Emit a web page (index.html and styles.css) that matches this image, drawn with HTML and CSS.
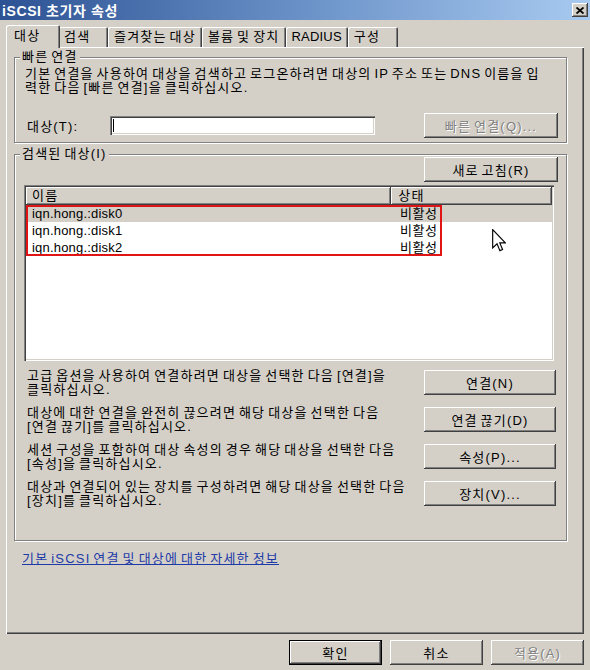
FILE: index.html
```html
<!DOCTYPE html>
<html lang="ko">
<head>
    <meta charset="UTF-8">
    <title>iSCSI 초기자 속성</title>
    <link rel="stylesheet" href="styles.css">
</head>
<body>
    <div class="titlebar">
        <span class="title">iSCSI 초기자 속성</span>
        <span class="close-btn">
            <svg width="8" height="7" viewBox="0 0 8 7"><path d="M0.5 0.5L7.5 6.5M7.5 0.5L0.5 6.5" stroke="#000" stroke-width="1.8"/></svg>
        </span>
    </div>

    <div class="tabs">
        <div class="tab active">대상</div>
        <div class="tab">검색</div>
        <div class="tab">즐겨찾는 대상</div>
        <div class="tab">볼륨 및 장치</div>
        <div class="tab latin">RADIUS</div>
        <div class="tab">구성</div>
    </div>

    <div class="tab-page">
        <fieldset class="group">
            <legend>빠른 연결</legend>
            <div class="quick-body">
                <p class="desc">기본 연결을 사용하여 대상을 검색하고 로그온하려면 대상의 IP 주소 또는 DNS 이름을 입<br>력한 다음 [빠른 연결]을 클릭하십시오.</p>
                <div class="quick-row">
                    <label class="target-label">대상(T):</label>
                    <div class="textbox"><span class="caret"></span></div>
                    <button class="btn wide disabled">빠른 연결(Q)...</button>
                </div>
            </div>
        </fieldset>

        <fieldset class="group found">
            <legend>검색된 대상(I)</legend>
            <div class="found-body">
                <div class="refresh-row">
                    <button class="btn wide">새로 고침(R)</button>
                </div>

                <div class="listview">
                    <div class="lv-header">
                        <div class="lv-col name">이름</div>
                        <div class="lv-col state">상태</div>
                    </div>
                    <div class="lv-row selected">
                        <div class="name latin">iqn.hong.:disk0</div>
                        <div class="state">비활성</div>
                    </div>
                    <div class="lv-row">
                        <div class="name latin">iqn.hong.:disk1</div>
                        <div class="state">비활성</div>
                    </div>
                    <div class="lv-row">
                        <div class="name latin">iqn.hong.:disk2</div>
                        <div class="state">비활성</div>
                    </div>
                    <div class="mark-box"></div>
                    <svg class="cursor" width="14" height="23" viewBox="0 0 12 20">
                        <path d="M0.5 0.5V16.5L4.3 12.9L6.8 18.8L9.1 17.8L6.7 12.1H11.5Z" fill="#fff" stroke="#000" stroke-width="1"/>
                    </svg>
                </div>

                <div class="actions">
                    <div class="action">
                        <p>고급 옵션을 사용하여 연결하려면 대상을 선택한 다음 [연결]을<br>클릭하십시오.</p>
                        <button class="btn action-btn">연결(N)</button>
                    </div>
                    <div class="action">
                        <p>대상에 대한 연결을 완전히 끊으려면 해당 대상을 선택한 다음<br>[연결 끊기]를 클릭하십시오.</p>
                        <button class="btn action-btn">연결 끊기(D)</button>
                    </div>
                    <div class="action">
                        <p>세션 구성을 포함하여 대상 속성의 경우 해당 대상을 선택한 다음<br>[속성]을 클릭하십시오.</p>
                        <button class="btn action-btn">속성(P)...</button>
                    </div>
                    <div class="action">
                        <p>대상과 연결되어 있는 장치를 구성하려면 해당 대상을 선택한 다음<br>[장치]를 클릭하십시오.</p>
                        <button class="btn action-btn">장치(V)...</button>
                    </div>
                </div>
            </div>
        </fieldset>

        <a class="info-link" href="#">기본 iSCSI 연결 및 대상에 대한 자세한 정보</a>
    </div>

    <div class="dialog-buttons">
        <button class="btn dlg default">확인</button>
        <button class="btn dlg">취소</button>
        <button class="btn dlg disabled">적용(A)</button>
    </div>
</body>
</html>
```

FILE: styles.css
```css
* {
    box-sizing: border-box;
}
body {
    margin: 0;
    width: 590px;
    height: 670px;
    overflow: hidden;
    background-color: #d4d0c8;
    font-family: "Liberation Sans", "Noto Sans CJK KR", sans-serif;
    font-size: 13px;
    letter-spacing: 1.2px;
    word-spacing: -1.9px;
    color: #000;
}
.latin {
    letter-spacing: 0.2px;
}

/* title bar */
.titlebar {
    height: 20px;
    display: flex;
    align-items: center;
    justify-content: space-between;
    padding: 0 2px;
    background: linear-gradient(to right, #2d5294, #6f96cb 55%, #a8caf0);
}
.title {
    color: #fff;
    font-weight: bold;
    font-size: 14px;
    letter-spacing: 0.6px;
    word-spacing: 0;
}
.close-btn {
    width: 16px;
    height: 14px;
    display: flex;
    align-items: center;
    justify-content: center;
    background-color: #d4d0c8;
    box-shadow: inset -1px -1px #404040, inset 1px 1px #fff, inset -2px -2px #808080;
}

/* tabs */
.tabs {
    display: flex;
    align-items: flex-end;
    height: 27px;
    padding-left: 8px;
}
.tab {
    height: 20px;
    min-width: 50px;
    padding: 1px 6px 0;
    line-height: 18px;
    white-space: nowrap;
    border-radius: 2px 2px 0 0;
    box-shadow: inset 1px 1px #fff, inset -1px 0 #404040, inset -2px 0 #808080;
}
.tab.active {
    position: relative;
    z-index: 1;
    height: 23px;
    min-width: 54px;
    margin: 0 -2px -1px;
    padding: 2px 8px 0;
    background-color: #d4d0c8;
}

/* tab page */
.tab-page {
    margin: 0 6px;
    height: 587px;
    padding: 3px 17px 0 8px;
    box-shadow: inset 1px 1px #fff, inset -1px -1px #404040, inset -2px -2px #808080;
}
.group {
    margin: 0;
    padding: 0;
    min-width: 0;
    border: 1px solid #808080;
    box-shadow: inset 1px 1px #fff, 1px 1px #fff;
}
.group legend {
    margin-left: 5px;
    padding: 0 2px;
    line-height: 14px;
    background-color: #d4d0c8;
}
.group.found {
    margin-top: 4px;
}
.quick-body {
    padding: 3px 8px 4px 10px;
}
.desc {
    margin: 0;
    line-height: 14px;
    white-space: nowrap;
}
.quick-row {
    display: flex;
    align-items: center;
    height: 25px;
    margin-top: 18px;
    padding-left: 2px;
}
.target-label {
    width: 83px;
}
.textbox {
    width: 265px;
    height: 19px;
    padding: 3px 0 0 3px;
    background-color: #fff;
    box-shadow: inset 1px 1px #808080, inset 2px 2px #404040, inset -1px -1px #fff, inset -2px -2px #d4d0c8;
}
.caret {
    display: block;
    width: 1px;
    height: 13px;
    background-color: #000;
}

/* buttons */
.btn {
    height: 25px;
    padding: 0;
    border: none;
    background-color: #d4d0c8;
    font: inherit;
    letter-spacing: inherit;
    word-spacing: inherit;
    color: #000;
    box-shadow: inset -1px -1px #404040, inset 1px 1px #fff, inset -2px -2px #808080;
}
.btn.wide {
    width: 134px;
    margin-left: auto;
}
.btn.disabled {
    color: #808080;
    text-shadow: 1px 1px #fff;
}

/* discovered targets */
.found-body {
    padding: 0 8px 33px 9px;
}
.refresh-row {
    display: flex;
    margin-top: -4px;
}
.listview {
    position: relative;
    height: 176px;
    margin: 3px 4px 0 0;
    padding: 2px;
    background-color: #fff;
    box-shadow: inset 1px 1px #808080, inset 2px 2px #404040, inset -1px -1px #fff, inset -2px -2px #d4d0c8;
}
.lv-header {
    display: flex;
    height: 18px;
}
.lv-col {
    line-height: 17px;
    background-color: #d4d0c8;
    box-shadow: inset -1px -1px #404040, inset 1px 1px #fff, inset -2px -2px #808080;
}
.lv-col.name {
    width: 366px;
    padding-left: 6px;
}
.lv-col.state {
    width: 161px;
    padding-left: 7px;
}
.lv-row {
    display: flex;
    height: 17px;
    line-height: 17px;
}
.lv-row .name {
    width: 366px;
    padding-left: 6px;
}
.lv-row .state {
    padding-left: 8px;
    letter-spacing: 0.6px;
}
.lv-row.selected {
    background-color: #d4d0c8;
}
.mark-box {
    position: absolute;
    left: 2px;
    top: 20px;
    width: 416px;
    height: 51px;
    border: 2px solid #e01414;
}
.cursor {
    position: absolute;
    left: 468px;
    top: 44px;
}

.actions {
    display: flex;
    flex-direction: column;
    gap: 11px;
    margin-top: 9px;
}
.action {
    display: flex;
    align-items: flex-start;
    height: 26px;
    padding-left: 3px;
}
.action p {
    margin: -1px 0 0;
    line-height: 14px;
    white-space: nowrap;
}
.action-btn {
    width: 132px;
    margin-left: auto;
    margin-right: 2px;
}

.info-link {
    display: inline-block;
    margin: 10px 0 0 8px;
    color: #1c3aa8;
    line-height: 15px;
}

/* dialog buttons */
.dialog-buttons {
    display: flex;
    justify-content: flex-end;
    gap: 8px;
    margin-top: 6px;
    padding-right: 6px;
}
.btn.dlg {
    width: 93px;
}
.btn.default {
    border: 1px solid #000;
}
```
